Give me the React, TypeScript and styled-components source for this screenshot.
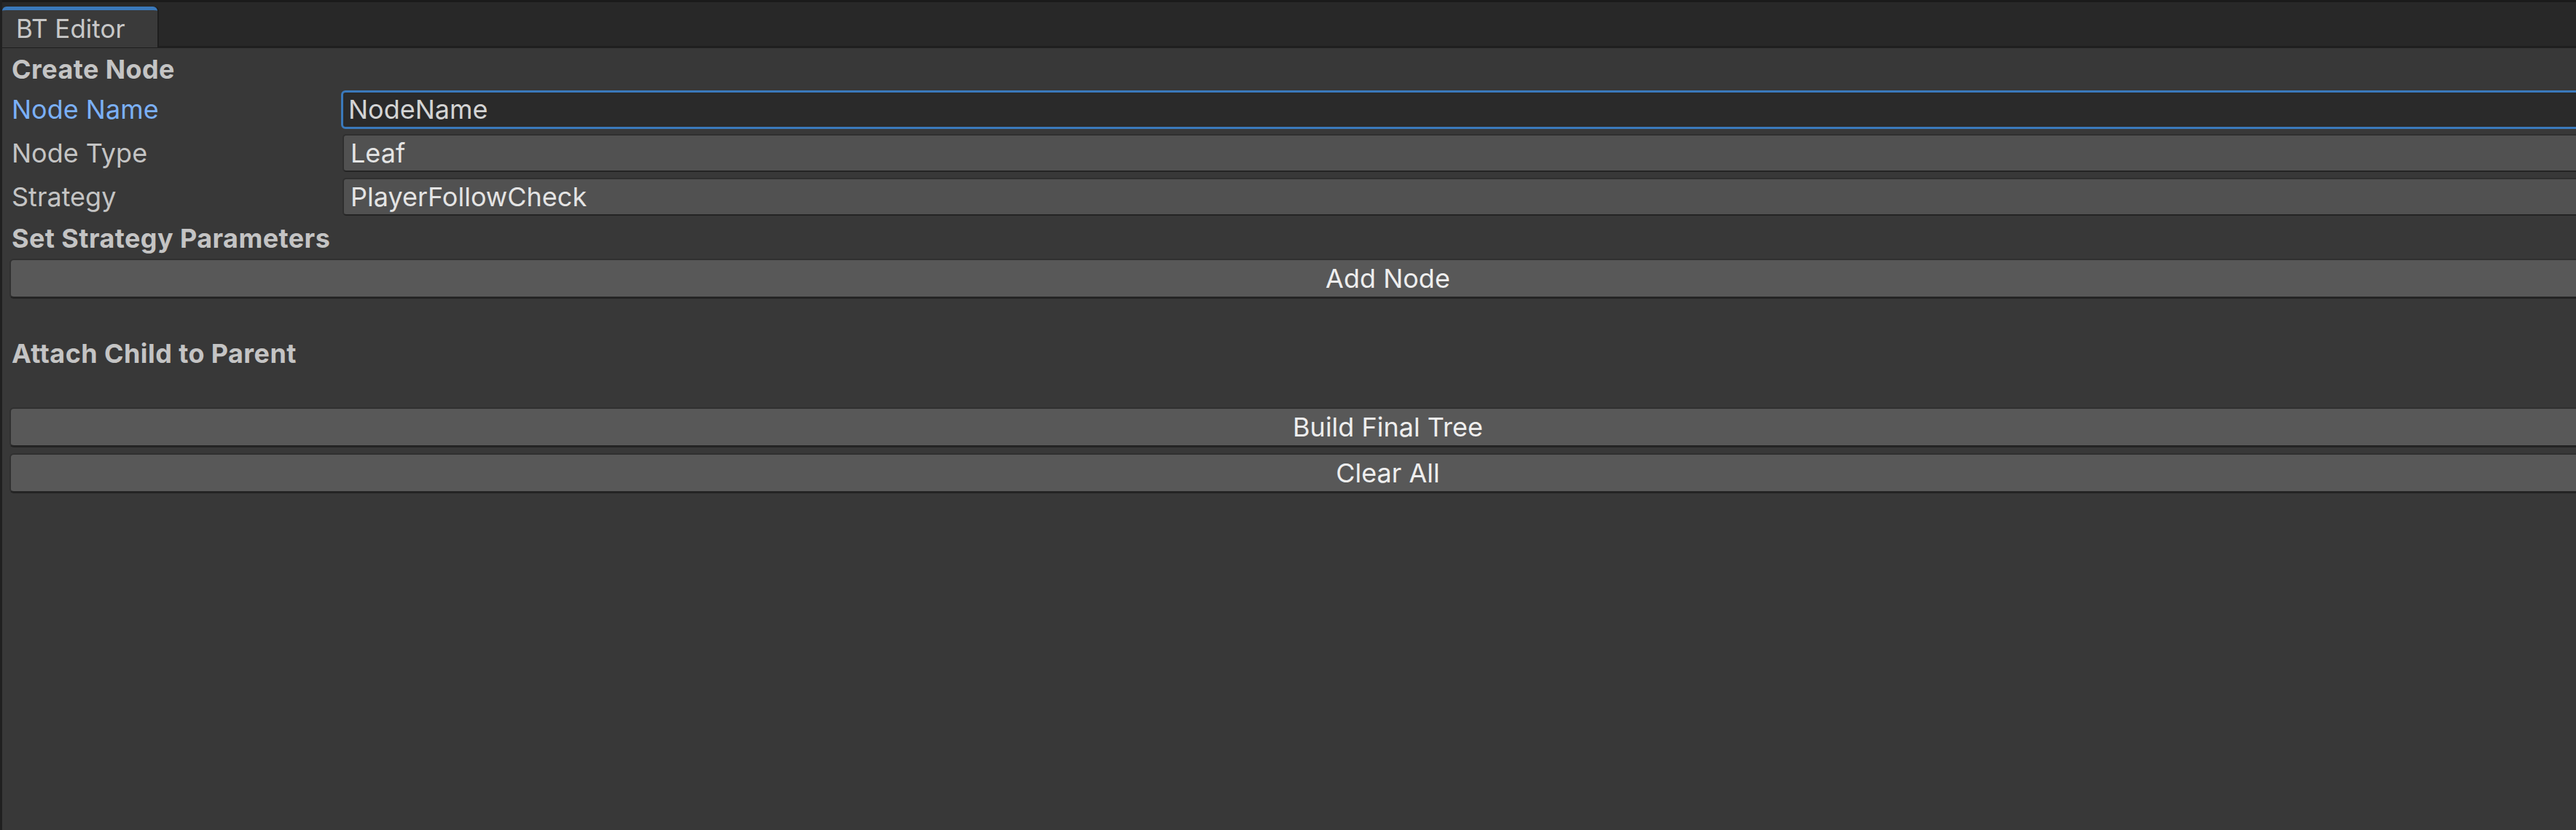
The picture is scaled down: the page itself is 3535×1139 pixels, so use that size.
import React, { FC } from 'react';
import styled, { createGlobalStyle } from 'styled-components';

const GlobalStyle = createGlobalStyle`
  html, body {
    margin: 0;
    padding: 0;
    background: #383838;
    overflow: hidden;
  }
  * {
    box-sizing: border-box;
  }
`;

const FONT = `Inter, 'Noto Sans', 'Liberation Sans', sans-serif`;

type FieldProps = {
  label: string;
  focused?: boolean;
};

export const App: FC = () => {
  return (
    <>
      <GlobalStyle />
      <Window>
        <TabBar>
          <Tab>BT Editor</Tab>
        </TabBar>
        <Content>
          <SectionTitle>Create Node</SectionTitle>
          <FieldRow label="Node Name" focused>
            <TextField>NodeName</TextField>
          </FieldRow>
          <FieldRow label="Node Type">
            <Dropdown>Leaf</Dropdown>
          </FieldRow>
          <FieldRow label="Strategy">
            <Dropdown>PlayerFollowCheck</Dropdown>
          </FieldRow>
          <SectionTitle>Set Strategy Parameters</SectionTitle>
          <Button $gap={3}>Add Node</Button>
          <SectionTitle $gap={48}>Attach Child to Parent</SectionTitle>
          <Button $gap={49}>Build Final Tree</Button>
          <Button $gap={8}>Clear All</Button>
        </Content>
      </Window>
    </>
  );
};

const FieldRow: FC<React.PropsWithChildren<FieldProps>> = ({
  label,
  focused,
  children,
}) => (
  <Row>
    <Label $focused={focused}>{label}</Label>
    {children}
  </Row>
);

export default App;

const Window = styled.div`
  display: flex;
  flex-direction: column;
  width: 3800px;
  height: 1139px;
  background: #383838;
  border-left: 3px solid #202020;
  font-family: ${FONT};
`;

const TabBar = styled.div`
  display: flex;
  align-items: flex-end;
  height: 66px;
  background: #282828;
  border-top: 3px solid #1b1b1b;
  border-bottom: 3px solid #1f1f1f;
`;

const Tab = styled.div`
  width: 213px;
  height: 56px;
  margin-bottom: -2px;
  padding-left: 19px;
  background: #3a3a3a;
  border-top: 5px solid #3a79bb;
  border-radius: 6px 6px 0 0;
  box-shadow: 2px 0 0 #1e1e1e;
  color: #c8c8c8;
  font-size: 35px;
  line-height: 51px;
`;

const Content = styled.div`
  display: flex;
  flex-direction: column;
  padding-top: 2px;
`;

const SectionTitle = styled.div<{ $gap?: number }>`
  height: 52px;
  margin-top: ${(p) => p.$gap ?? 0}px;
  padding-left: 13px;
  color: #c4c4c4;
  font-size: 36px;
  font-weight: 700;
  letter-spacing: 0.4px;
  line-height: 54px;
  white-space: nowrap;
`;

const Row = styled.div`
  display: grid;
  grid-template-columns: 452px 1fr;
  align-items: center;
  height: 60px;
  padding-left: 13px;
`;

const Label = styled.div<{ $focused?: boolean }>`
  color: ${(p) => (p.$focused ? '#7bb0f7' : '#c4c4c4')};
  font-size: 36px;
  white-space: nowrap;
`;

const TextField = styled.div`
  height: 53px;
  padding-left: 7px;
  background: #2a2a2a;
  border: 3px solid #3a79bb;
  border-radius: 6px;
  color: #d4d4d4;
  font-size: 36px;
  line-height: 47px;
  white-space: nowrap;
`;

const Dropdown = styled.div`
  height: 52px;
  margin-left: 2px;
  padding-left: 9px;
  background: #515151;
  border: 2px solid #2f2f2f;
  border-bottom-color: #242424;
  border-radius: 5px;
  color: #e4e4e4;
  font-size: 36px;
  line-height: 48px;
  white-space: nowrap;
`;

const Button = styled.div<{ $gap?: number }>`
  height: 55px;
  margin: ${(p) => p.$gap ?? 0}px 4px 0 10px;
  background: #585858;
  border: 2px solid #303030;
  border-bottom: 3px solid #242424;
  border-radius: 6px;
  color: #eeeeee;
  font-size: 36px;
  line-height: 50px;
  text-align: center;
  white-space: nowrap;
`;
